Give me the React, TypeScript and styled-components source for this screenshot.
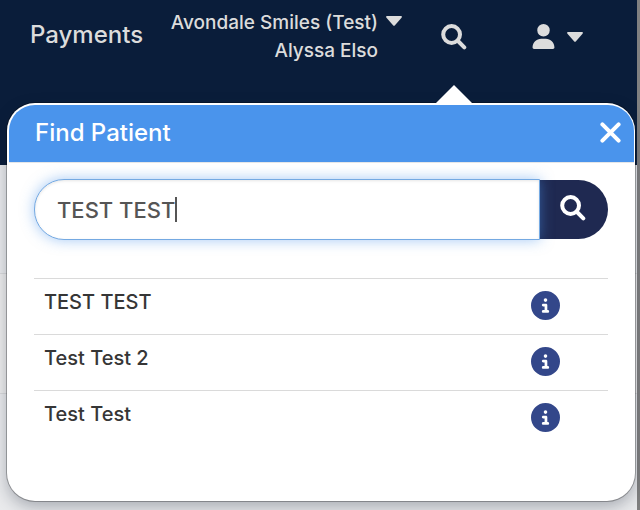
import React, { useState } from 'react';
import styled, { createGlobalStyle } from 'styled-components';
import { FaUser, FaCircleInfo } from 'react-icons/fa6';

const GlobalStyle = createGlobalStyle`
  *, *::before, *::after { box-sizing: border-box; }
  html, body { margin: 0; }
  body {
    background: #e9eaec;
    font-family: Inter, "Liberation Sans", sans-serif;
    overflow: hidden;
  }
  button { border: 0; padding: 0; background: none; font: inherit; color: inherit; cursor: pointer; }
`;

const Page = styled.div`
  position: relative;
  min-height: 100vh;
  border-right: 3px solid #808080;
`;

const TopBar = styled.header`
  display: flex;
  align-items: flex-start;
  height: 165px;
  padding: 9px 54px 0 30px;
  background: #0a1d3a;
  color: #dcdcdc;
  font-weight: 500;
`;

const NavLink = styled.a`
  margin-top: 11px;
  font-size: 24px;
  line-height: 30px;
  color: inherit;
  text-decoration: none;
`;

const Account = styled.button`
  display: flex;
  align-items: flex-start;
  gap: 8px;
  margin-left: auto;
  font-size: 19px;
  line-height: 28px;
  text-align: right;
  white-space: nowrap;

  svg { margin-top: 7px; }
`;

const AccountName = styled.span`
  display: block;
`;

const IconButton = styled.button<{ $start: number }>`
  display: flex;
  align-items: center;
  gap: 11px;
  margin: 15px 0 0 ${(p) => p.$start}px;
`;

const Backdrop = styled.main`
  padding-top: 108px;
`;

const BackdropBand = styled.div`
  height: 121px;
  border: solid #d8d9da;
  border-width: 1px 0;
  background: #ececec;
`;

const Popover = styled.section`
  position: absolute;
  top: 103px;
  left: 7px;
  right: 2px;
  padding: 2px 1px 0 2px;
  border-radius: 28px;
  background: #fff;
  box-shadow: 0 0 0 1px rgba(0, 0, 0, 0.28), 0 6px 16px rgba(20, 30, 50, 0.3);
`;

const Pointer = styled.svg`
  position: absolute;
  top: -18px;
  right: 163px;
`;

const PopoverHeader = styled.div`
  display: flex;
  align-items: center;
  justify-content: space-between;
  height: 58px;
  padding: 0 13px 2px 26px;
  border-bottom: 1px solid #e4e6e8;
  border-radius: 26px 26px 0 0;
  background: #4a94ec;
  color: #fff;
`;

const Title = styled.h2`
  margin: 0;
  font-size: 24px;
  font-weight: 500;
  line-height: 30px;
`;

const CloseButton = styled.button`
  display: flex;
`;

const PopoverBody = styled.div`
  padding: 16px 26px 54px 25px;
`;

const SearchForm = styled.form`
  display: flex;
  align-items: center;
`;

const Field = styled.label`
  position: relative;
  z-index: 1;
  display: flex;
  align-items: center;
  flex: 1;
  min-width: 0;
  height: 61px;
  padding-left: 22px;
  border: 1px solid #74a9e2;
  border-radius: 30px 0 0 30px;
  background: #fff;
  box-shadow: inset 0 1px 3px rgba(0, 0, 0, 0.1), 0 0 14px rgba(74, 148, 236, 0.5);
`;

const FieldInput = styled.input`
  field-sizing: content;
  max-width: 100%;
  padding: 0;
  border: 0;
  outline: 0;
  background: transparent;
  font: 500 22px/30px Inter, "Liberation Sans", sans-serif;
  color: #555;
  caret-color: transparent;
`;

const Caret = styled.span`
  width: 2px;
  height: 25px;
  background: #555;
`;

const SearchButton = styled.button`
  display: flex;
  align-items: center;
  width: 68px;
  height: 59px;
  padding: 0 0 4px 20px;
  border-radius: 0 30px 30px 0;
  background: #1f2951;
  color: #fff;
`;

const Results = styled.table`
  width: 100%;
  margin-top: 38px;
  border-collapse: collapse;
`;

const ResultRow = styled.tr`
  height: 56px;
  border-top: 1px solid #dadada;
`;

const NameCell = styled.td`
  padding: 9px 10px;
  vertical-align: top;
  font-size: 20px;
  font-weight: 500;
  line-height: 28px;
  color: #363636;
`;

const ActionCell = styled.td`
  width: 77px;
  padding: 12px 0 0;
  vertical-align: top;
`;

const InfoButton = styled.button`
  display: flex;
  color: #33478a;
`;

function CaretDown() {
  return (
    <svg width="16" height="10" viewBox="0 0 16 10" fill="#dcdcdc" aria-hidden="true">
      <path d="M1 0H15Q16.6.2 15.5 1.8L9 9.2Q8 10.2 7 9.2L.5 1.8Q-.6.2 1 0Z" />
    </svg>
  );
}

function SearchIcon() {
  return (
    <svg width="26" height="26" viewBox="0 0 26 26" fill="none" stroke="currentColor" strokeWidth="4" strokeLinecap="round" aria-hidden="true">
      <circle cx="10.6" cy="10.5" r="8.4" />
      <path d="M17 17 23.3 23.3" />
    </svg>
  );
}

function CloseIcon() {
  return (
    <svg width="21" height="21" viewBox="0 0 21 21" fill="none" stroke="currentColor" strokeWidth="4" strokeLinecap="round" aria-hidden="true">
      <path d="M2.4 2.4 18.6 18.6M18.6 2.4 2.4 18.6" />
    </svg>
  );
}

const patients = ['TEST TEST', 'Test Test 2', 'Test Test'];

export default function App() {
  const [query, setQuery] = useState('TEST TEST');

  return (
    <>
      <GlobalStyle />
      <Page>
        <TopBar>
          <NavLink href="#payments">Payments</NavLink>
          <Account type="button">
            <span>
              <AccountName>Avondale Smiles (Test)</AccountName>
              <AccountName>Alyssa Elso</AccountName>
            </span>
            <CaretDown />
          </Account>
          <IconButton $start={39} type="button" aria-label="Find patient">
            <SearchIcon />
          </IconButton>
          <IconButton $start={64} type="button" aria-label="User menu">
            <FaUser size={25} />
            <CaretDown />
          </IconButton>
        </TopBar>
        <Backdrop>
          <BackdropBand />
        </Backdrop>

        <Popover aria-labelledby="find-title">
          <Pointer width="36" height="18" viewBox="0 0 36 18" fill="#fff" aria-hidden="true">
            <path d="M0 18 18 0 36 18Z" />
          </Pointer>
          <PopoverHeader>
            <Title id="find-title">Find Patient</Title>
            <CloseButton type="button" aria-label="Close">
              <CloseIcon />
            </CloseButton>
          </PopoverHeader>
          <PopoverBody>
            <SearchForm onSubmit={(e) => e.preventDefault()}>
              <Field>
                <FieldInput
                  aria-label="Patient name"
                  value={query}
                  onChange={(e) => setQuery(e.target.value)}
                />
                <Caret />
              </Field>
              <SearchButton type="submit" aria-label="Search">
                <SearchIcon />
              </SearchButton>
            </SearchForm>
            <Results>
              <tbody>
                {patients.map((name) => (
                  <ResultRow key={name}>
                    <NameCell>{name}</NameCell>
                    <ActionCell>
                      <InfoButton type="button" aria-label={`Details for ${name}`}>
                        <FaCircleInfo size={29} />
                      </InfoButton>
                    </ActionCell>
                  </ResultRow>
                ))}
              </tbody>
            </Results>
          </PopoverBody>
        </Popover>
      </Page>
    </>
  );
}
